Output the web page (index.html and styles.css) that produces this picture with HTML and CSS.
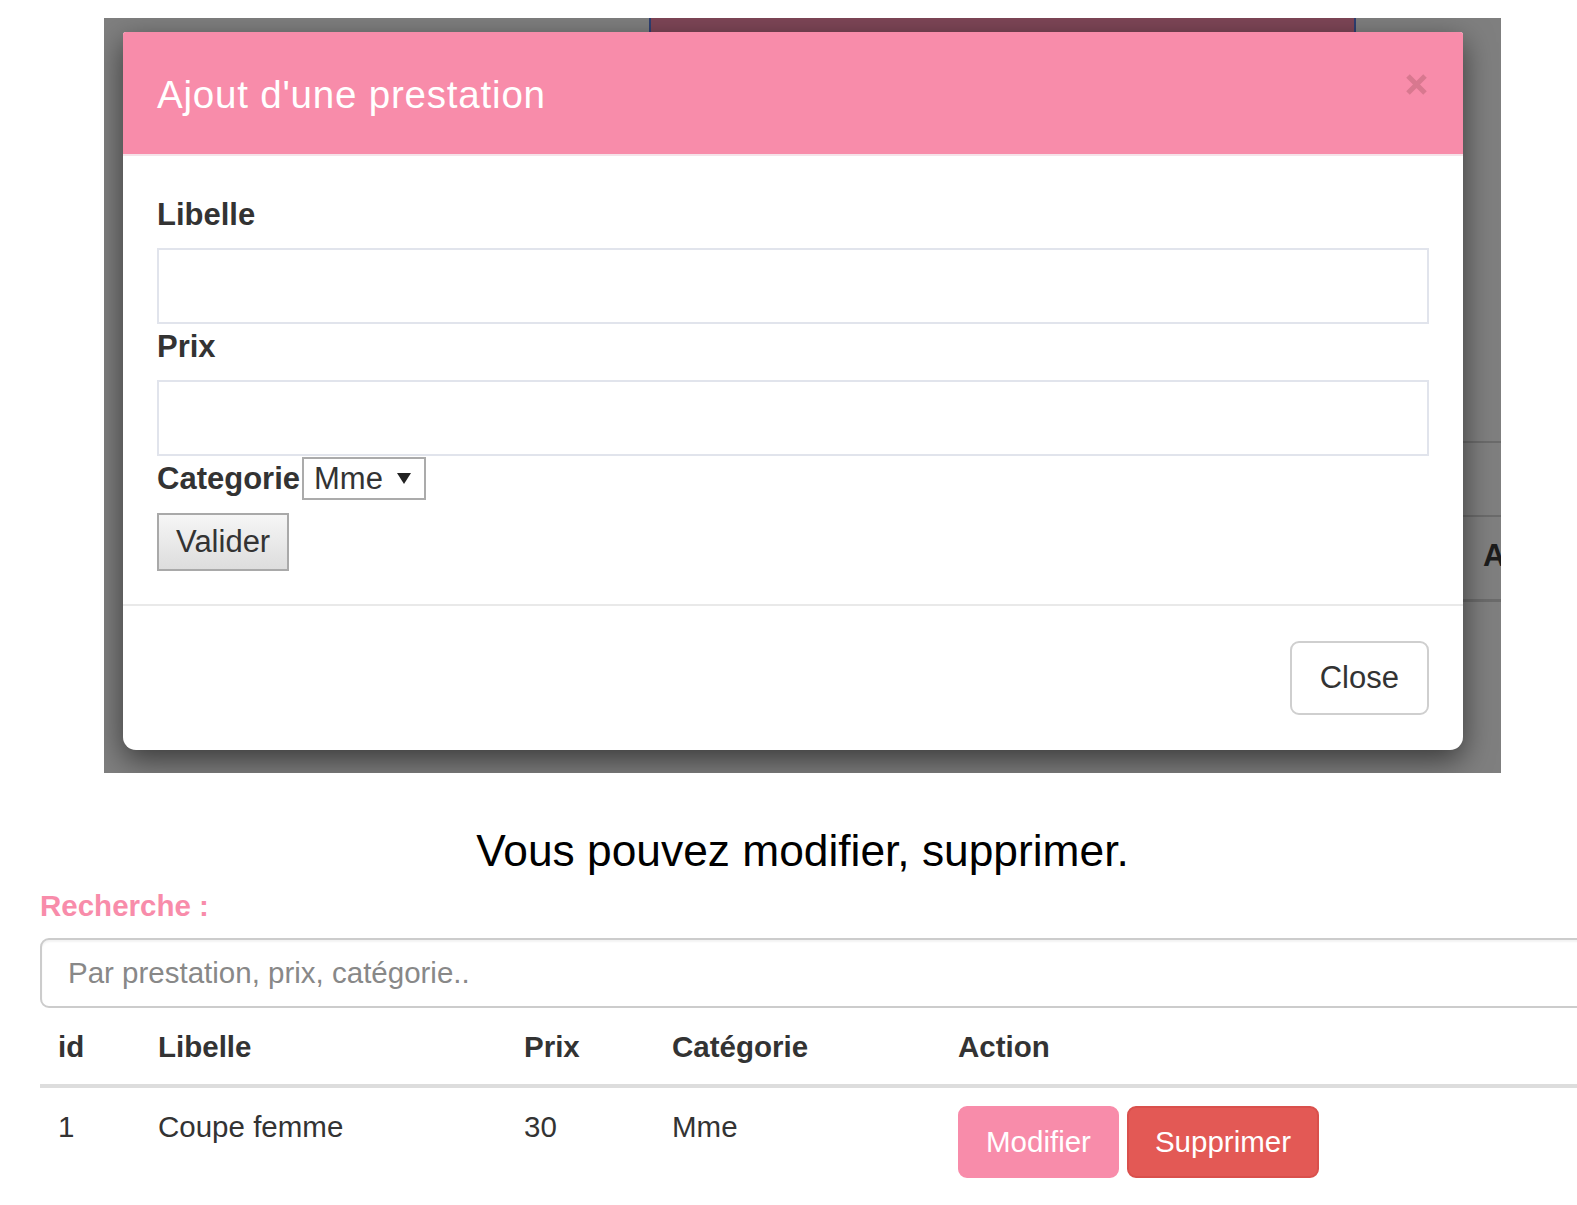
FILE: index.html
```html
<!DOCTYPE html>
<html lang="fr">
<head>
<meta charset="utf-8">
<title>Prestations</title>
<link rel="stylesheet" href="styles.css">
</head>
<body>
<div class="page">
  <div class="shot">
    <div class="under-nav"></div>
    <div class="under-line under-line-1"></div>
    <div class="under-line under-line-2"></div>
    <div class="under-line under-line-3"></div>
    <div class="under-a">A</div>
    <div class="modal">
      <div class="modal-header">
        <h4 class="modal-title">Ajout d'une prestation</h4>
        <span class="close-x"><svg width="23" height="23" viewBox="0 0 23 23"><path d="M3 3 L20 20 M20 3 L3 20" stroke="currentColor" stroke-width="5" fill="none"/></svg></span>
      </div>
      <div class="modal-body">
        <label class="lbl">Libelle</label>
        <div class="field"></div>
        <label class="lbl">Prix</label>
        <div class="field"></div>
        <div class="cat-row">
          <label class="lbl lbl-inline">Categorie</label>
          <div class="fake-select"><span>Mme</span><svg width="14" height="11" viewBox="0 0 14 11"><path d="M0 0 L14 0 L7 11 Z" fill="#222"/></svg></div>
        </div>
        <div class="btn-valider">Valider</div>
      </div>
      <div class="modal-footer">
        <div class="btn-close">Close</div>
      </div>
    </div>
  </div>

  <h2 class="notice">Vous pouvez modifier, supprimer.</h2>

  <section class="list">
    <div class="search-label">Recherche :</div>
    <input class="search" type="text" placeholder="Par prestation, prix, catégorie..">
    <table class="grid">
      <colgroup>
        <col class="c-id"><col class="c-lib"><col class="c-prix"><col class="c-cat"><col class="c-act">
      </colgroup>
      <thead>
        <tr><th>id</th><th>Libelle</th><th>Prix</th><th>Catégorie</th><th>Action</th></tr>
      </thead>
      <tbody>
        <tr>
          <td>1</td><td>Coupe femme</td><td>30</td><td>Mme</td>
          <td><div class="actions"><span class="btn btn-edit">Modifier</span><span class="btn btn-del">Supprimer</span></div></td>
        </tr>
      </tbody>
    </table>
  </section>
</div>
</body>
</html>
```

FILE: styles.css
```css
html, body {
  margin: 0;
  padding: 0;
  overflow: hidden;
  background: #fff;
}
body {
  font-family: "Liberation Sans", Arial, Helvetica, sans-serif;
  color: #333;
}
.page {
  width: 1605px;
  padding-top: 18px;
}

/* ---------- screenshot of the modal ---------- */
.shot {
  position: relative;
  width: 1397px;
  height: 755px;
  box-sizing: border-box;
  margin: 0 auto;
  padding: 14px 38px 23px 19px;
  background: #7f7f7f;
  overflow: hidden;
}
.under-nav {
  position: absolute;
  top: 0;
  left: 545px;
  width: 703px;
  height: 40px;
  background: #7e4657;
  border-left: 2px solid #2e3f72;
  border-right: 2px solid #2e3f72;
}
.under-line {
  position: absolute;
  left: 1350px;
  right: 0;
  height: 2px;
  background: #6b6b6b;
}
.under-line-1 { top: 423px; }
.under-line-2 { top: 497px; }
.under-line-3 { top: 581px; height: 3px; }
.under-a {
  position: absolute;
  left: 1379px;
  top: 516px;
  font-size: 31px;
  font-weight: bold;
  line-height: 44px;
  color: #1c1c1c;
}
.modal {
  position: relative;
  z-index: 1;
  height: 718px;
  background: #fff;
  border-radius: 3px 3px 13px 13px;
  box-shadow: 0 10px 30px rgba(0, 0, 0, 0.55);
  overflow: hidden;
}
.modal-header {
  display: flex;
  justify-content: space-between;
  align-items: flex-start;
  height: 124px;
  box-sizing: border-box;
  padding: 35px 35px 31px 34px;
  background: #f88caa;
  border-bottom: 2px solid #f5e3e9;
}
.modal-title {
  margin: 0;
  font-size: 38.5px;
  font-weight: normal;
  letter-spacing: 0.8px;
  line-height: 56px;
  color: #fff;
}
.close-x {
  display: flex;
  margin-top: 6px;
  color: #d8788f;
}
.modal-body {
  display: flex;
  flex-direction: column;
  align-items: flex-start;
  padding: 37px 34px 33px 34px;
}
.lbl {
  display: block;
  font-size: 31px;
  font-weight: bold;
  line-height: 44px;
  color: #333;
  margin-bottom: 11px;
}
.field {
  align-self: stretch;
  height: 76px;
  box-sizing: border-box;
  border: 2px solid #e1e4ec;
  margin-bottom: 1px;
}
.cat-row {
  display: flex;
  align-items: flex-start;
  margin-bottom: 12px;
}
.lbl-inline {
  margin-bottom: 0;
  margin-right: 2px;
}
.fake-select {
  display: flex;
  align-items: center;
  justify-content: space-between;
  width: 124px;
  height: 43px;
  box-sizing: border-box;
  padding: 0 13px 0 10px;
  border: 2px solid #ababab;
  background: #fff;
  font-size: 31px;
  color: #333;
}
.btn-valider {
  height: 58px;
  box-sizing: border-box;
  padding: 9px 17px;
  border: 2px solid #a9a9a9;
  background: linear-gradient(#f6f6f6, #dddddd);
  font-size: 31px;
  line-height: 36px;
  color: #333;
}
.modal-footer {
  display: flex;
  justify-content: flex-end;
  border-top: 2px solid #e9e9e9;
  padding: 35px 34px;
}
.btn-close {
  height: 74px;
  box-sizing: border-box;
  padding: 13px 28px;
  border: 2px solid #cfcfcf;
  border-radius: 9px;
  font-size: 31px;
  line-height: 44px;
  color: #333;
  background: #fff;
}

/* ---------- page below ---------- */
.notice {
  margin: 53px 0 0;
  text-align: center;
  font-size: 44.3px;
  font-weight: normal;
  line-height: 50px;
  color: #000;
}
.list {
  padding-left: 40px;
}
.search-label {
  margin-top: 13px;
  font-size: 29.5px;
  font-weight: bold;
  line-height: 34px;
  color: #f88caa;
}
.search {
  display: block;
  width: 1600px;
  height: 70px;
  box-sizing: border-box;
  margin: 15px 0 0;
  padding: 0 26px;
  border: 2px solid #cccccc;
  border-radius: 9px;
  font-family: "Liberation Sans", Arial, Helvetica, sans-serif;
  font-size: 29.5px;
  color: #555;
  outline: none;
  box-shadow: inset 0 2px 2px rgba(0, 0, 0, 0.05);
}
.search::placeholder {
  color: #888;
}
.grid {
  width: 1600px;
  table-layout: fixed;
  border-collapse: collapse;
  font-size: 29.5px;
  line-height: 41px;
  color: #333;
}
.c-id { width: 100px; }
.c-lib { width: 366px; }
.c-prix { width: 148px; }
.c-cat { width: 286px; }
.c-act { width: 700px; }
.grid th {
  text-align: left;
  font-weight: bold;
  padding: 17.5px 18px;
  border-bottom: 4px solid #dddddd;
}
.grid td {
  vertical-align: top;
  text-align: left;
  padding: 18px 18px;
}
.actions {
  display: flex;
  gap: 8px;
}
.btn {
  display: block;
  height: 72px;
  box-sizing: border-box;
  padding: 14px 26px;
  border: 2px solid transparent;
  border-radius: 9px;
  line-height: 40px;
  color: #fff;
}
.btn-edit {
  background: #f88caa;
  border-color: #f88caa;
}
.btn-del {
  background: #e35955;
  border-color: #d9504c;
}
```
